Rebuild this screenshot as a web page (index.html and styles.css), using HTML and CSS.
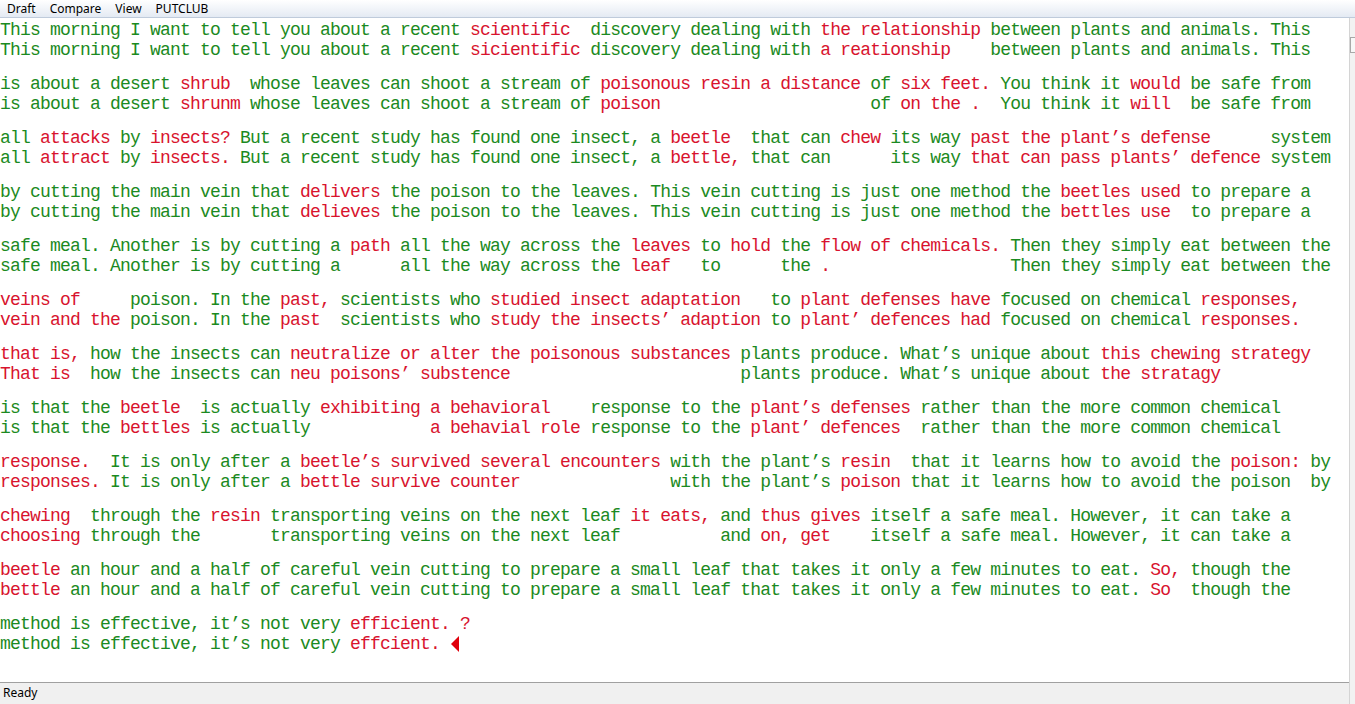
FILE: index.html
```html
<!DOCTYPE html>
<html lang="en">
<head>
<meta charset="utf-8">
<title>Compare</title>
<link rel="stylesheet" href="styles.css">
</head>
<body>
<div class="app">
  <nav class="menubar">
    <span class="menu-item">Draft</span>
    <span class="menu-item">Compare</span>
    <span class="menu-item">View</span>
    <span class="menu-item">PUTCLUB</span>
  </nav>
  <div class="workspace">
    <div class="left">
      <main class="doc">
<div class="pair"><div class="line">This morning I want to tell you about a recent <span class="r">scientific</span>  discovery dealing with <span class="r">the relationship</span> between plants and animals. This</div><div class="line">This morning I want to tell you about a recent <span class="r">sicientific</span> discovery dealing with <span class="r">a reationship</span>    between plants and animals. This</div></div>
<div class="pair"><div class="line">is about a desert <span class="r">shrub</span>  whose leaves can shoot a stream of <span class="r">poisonous resin a distance</span> of <span class="r">six feet.</span> You think it <span class="r">would</span> be safe from</div><div class="line">is about a desert <span class="r">shrunm</span> whose leaves can shoot a stream of <span class="r">poison</span>                     of <span class="r">on the .</span>  You think it <span class="r">will</span>  be safe from</div></div>
<div class="pair"><div class="line">all <span class="r">attacks</span> by <span class="r">insects?</span> But a recent study has found one insect, a <span class="r">beetle</span>  that can <span class="r">chew</span> its way <span class="r">past the plant’s defense</span>      system</div><div class="line">all <span class="r">attract</span> by <span class="r">insects.</span> But a recent study has found one insect, a <span class="r">bettle,</span> that can      its way <span class="r">that can pass plants’ defence</span> system</div></div>
<div class="pair"><div class="line">by cutting the main vein that <span class="r">delivers</span> the poison to the leaves. This vein cutting is just one method the <span class="r">beetles used</span> to prepare a</div><div class="line">by cutting the main vein that <span class="r">delieves</span> the poison to the leaves. This vein cutting is just one method the <span class="r">bettles use</span>  to prepare a</div></div>
<div class="pair"><div class="line">safe meal. Another is by cutting a <span class="r">path</span> all the way across the <span class="r">leaves</span> to <span class="r">hold</span> the <span class="r">flow of chemicals.</span> Then they simply eat between the</div><div class="line">safe meal. Another is by cutting a      all the way across the <span class="r">leaf</span>   to      the <span class="r">.</span>                  Then they simply eat between the</div></div>
<div class="pair"><div class="line"><span class="r">veins of</span>     poison. In the <span class="r">past,</span> scientists who <span class="r">studied insect adaptation</span>   to <span class="r">plant defenses have</span> focused on chemical <span class="r">responses,</span></div><div class="line"><span class="r">vein and the</span> poison. In the <span class="r">past</span>  scientists who <span class="r">study the insects’ adaption</span> to <span class="r">plant’ defences had</span> focused on chemical <span class="r">responses.</span></div></div>
<div class="pair"><div class="line"><span class="r">that is,</span> how the insects can <span class="r">neutralize or alter the poisonous substances</span> plants produce. What’s unique about <span class="r">this chewing strategy</span></div><div class="line"><span class="r">That is</span>  how the insects can <span class="r">neu poisons’ substence</span>                       plants produce. What’s unique about <span class="r">the stratagy</span></div></div>
<div class="pair"><div class="line">is that the <span class="r">beetle</span>  is actually <span class="r">exhibiting a behavioral</span>    response to the <span class="r">plant’s defenses</span> rather than the more common chemical</div><div class="line">is that the <span class="r">bettles</span> is actually            <span class="r">a behavial role</span> response to the <span class="r">plant’ defences</span>  rather than the more common chemical</div></div>
<div class="pair"><div class="line"><span class="r">response.</span>  It is only after a <span class="r">beetle’s survived several encounters</span> with the plant’s <span class="r">resin</span>  that it learns how to avoid the <span class="r">poison:</span> by</div><div class="line"><span class="r">responses.</span> It is only after a <span class="r">bettle survive counter</span>               with the plant’s <span class="r">poison</span> that it learns how to avoid the poison  by</div></div>
<div class="pair"><div class="line"><span class="r">chewing</span>  through the <span class="r">resin</span> transporting veins on the next leaf <span class="r">it eats,</span> and <span class="r">thus gives</span> itself a safe meal. However, it can take a</div><div class="line"><span class="r">choosing</span> through the       transporting veins on the next leaf          and <span class="r">on, get</span>    itself a safe meal. However, it can take a</div></div>
<div class="pair"><div class="line"><span class="r">beetle</span> an hour and a half of careful vein cutting to prepare a small leaf that takes it only a few minutes to eat. <span class="r">So,</span> though the</div><div class="line"><span class="r">bettle</span> an hour and a half of careful vein cutting to prepare a small leaf that takes it only a few minutes to eat. <span class="r">So</span>  though the</div></div>
<div class="pair"><div class="line">method is effective, it’s not very <span class="r">efficient.</span> <span class="r">?</span></div><div class="line">method is effective, it’s not very <span class="r">effcient.</span> <svg class="marker" width="10" height="20" viewBox="0 0 10 20"><polygon points="9,2 9,18 1,10" fill="#e0000c"/></svg></div></div>
      </main>
      <footer class="status">Ready</footer>
    </div>
    <aside class="scrollstrip"><div class="scroll-thumb"></div></aside>
  </div>
</div>
</body>
</html>
```

FILE: styles.css
```css
html, body {
  margin: 0;
  padding: 0;
  background: #ffffff;
}

.app {
  width: 1355px;
  height: 704px;
  display: flex;
  flex-direction: column;
  overflow: hidden;
}

.menubar {
  height: 17px;
  display: flex;
  align-items: center;
  background: linear-gradient(#ffffff, #e4eaf3);
  border-bottom: 1px solid #bfcbdb;
  font-family: "Noto Sans", "Liberation Sans", sans-serif;
  font-size: 12px;
  color: #000;
  flex-shrink: 0;
}

.menu-item {
  padding: 0 7px;
  line-height: 17px;
}

.workspace {
  flex: 1;
  display: flex;
  min-height: 0;
}

.left {
  flex: 1;
  display: flex;
  flex-direction: column;
  min-width: 0;
}

.doc {
  flex: 1;
  padding-top: 2px;
  font-family: "Liberation Mono", "DejaVu Sans Mono", monospace;
  font-size: 18px;
  letter-spacing: -0.8px;
  color: #1b8a22;
  overflow: hidden;
}

.pair {
  margin-bottom: 14px;
}

.line {
  height: 20px;
  line-height: 20px;
  white-space: pre;
}

.r {
  color: #d8132e;
}

.marker {
  vertical-align: top;
}

.status {
  height: 21px;
  border-top: 1px solid #a0a0a0;
  background: #f0f0f0;
  font-family: "Noto Sans", "Liberation Sans", sans-serif;
  font-size: 12px;
  line-height: 20px;
  padding-left: 3px;
  color: #000;
  flex-shrink: 0;
}

.scrollstrip {
  width: 5px;
  border-left: 1px solid #d4d4d4;
  background: #f2f2f2;
  padding-top: 19px;
}

.scroll-thumb {
  height: 14px;
  border: 1px solid #a8a8a8;
  border-right: none;
  background: #f8f8f8;
}
```
